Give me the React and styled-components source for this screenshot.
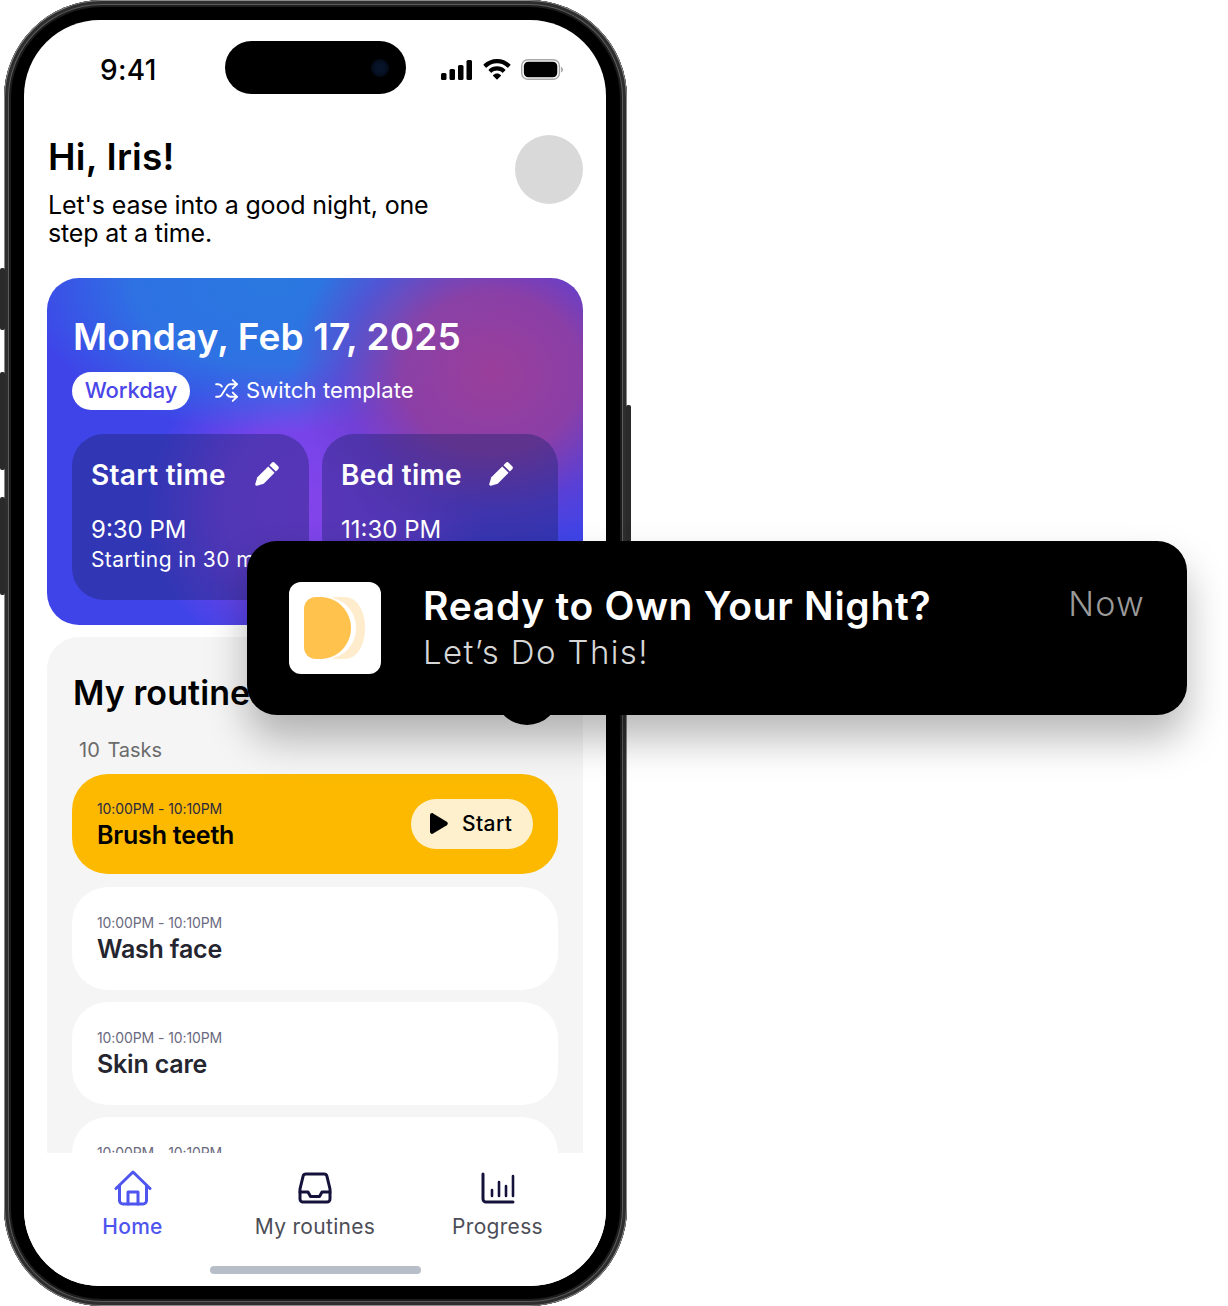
import React from 'react';
import styled, { createGlobalStyle } from 'styled-components';
import { Shuffle } from 'lucide-react';

const GlobalStyle = createGlobalStyle`
  html, body {
    margin: 0;
    padding: 0;
    background: #fff;
  }
  * {
    box-sizing: border-box;
  }
  body {
    font-family: Inter, "Noto Sans", sans-serif;
    color: #000;
  }
`;

const Stage = styled.div`
  position: relative;
  width: 1228px;
  height: 1306px;
  padding-left: 4px;
  overflow: hidden;
`;

const Phone = styled.div`
  position: relative;
  width: 623px;
  height: 1306px;
  padding: 20px 21px 20px 20px;
  background: #000;
  border-radius: 98px;
  box-shadow: inset 0 0 0 1px #8a8a8a, inset 0 0 0 4px #2e2e2e, inset 0 0 0 5px #5c5c5c, inset 0 0 0 7px #1c1c1c;
`;

const SideButton = styled.span`
  position: absolute;
  top: ${(p) => p.$top}px;
  ${(p) => (p.$right ? 'right: -4px;' : 'left: -4px;')}
  width: 5px;
  height: ${(p) => p.$height}px;
  background: #2a2a2a;
  border-radius: 2px;
`;

const Screen = styled.div`
  display: flex;
  flex-direction: column;
  height: 1266px;
  background: #fff;
  border-radius: 76px;
  overflow: hidden;
`;

const StatusBar = styled.div`
  display: grid;
  grid-template-columns: 201px 181px 1fr;
  height: 115px;
  padding-top: 21px;
`;

const Clock = styled.div`
  padding: 12px 0 0 76px;
  font-size: 28px;
  line-height: 34px;
  font-weight: 500;
  letter-spacing: 0.3px;
`;

const Island = styled.div`
  width: 181px;
  height: 53px;
  display: flex;
  align-items: center;
  justify-content: flex-end;
  padding-right: 17px;
  background: #000;
  border-radius: 27px;
`;

const Lens = styled.span`
  width: 18px;
  height: 18px;
  border-radius: 50%;
  background: radial-gradient(circle, #07142a 30%, #040c1a 65%, #000 100%);
`;

const StatusIcons = styled.div`
  display: flex;
  align-items: center;
  height: 53px;
  margin-top: 2px;
  padding-left: 35px;
  gap: 10px;
`;

const Content = styled.div`
  flex: 1;
  min-height: 0;
  display: flex;
  flex-direction: column;
  padding: 0 23px;
  overflow: hidden;
`;

const Header = styled.header`
  display: flex;
  justify-content: space-between;
  height: 143px;
`;

const Heading = styled.h1`
  margin: 0;
  padding-left: 1px;
  font-size: 37px;
  line-height: 44px;
  font-weight: 600;
  letter-spacing: 0.2px;
`;

const Intro = styled.p`
  margin: 12px 0 0;
  padding-left: 1px;
  width: 420px;
  font-size: 25px;
  line-height: 28px;
  letter-spacing: -0.15px;
`;

const Avatar = styled.div`
  width: 68px;
  height: 69px;
  border-radius: 50%;
  background: #d9d9d9;
`;

const DayCard = styled.section`
  flex: none;
  width: 536px;
  height: 347px;
  padding: 34px 25px 25px;
  border-radius: 32px;
  background:
    radial-gradient(200px 180px at 445px 95px, #9a3f9a 0%, rgba(146, 62, 160, 0.9) 45%, rgba(110, 60, 200, 0.55) 75%, transparent 100%),
    radial-gradient(250px 150px at 225px 5px, #2a78e0 0%, rgba(43, 122, 226, 0.85) 55%, transparent 100%),
    radial-gradient(170px 170px at 270px 230px, #8244ea 0%, rgba(130, 68, 234, 0.8) 55%, transparent 100%),
    #3f44e8;
  color: #fff;
`;

const DayTitle = styled.h2`
  margin: 0;
  padding-left: 1px;
  font-size: 37px;
  line-height: 50px;
  font-weight: 600;
  letter-spacing: 0.15px;
`;

const TemplateRow = styled.div`
  display: flex;
  align-items: center;
  gap: 24px;
  margin-top: 10px;
`;

const Pill = styled.span`
  display: flex;
  align-items: center;
  justify-content: center;
  width: 118px;
  height: 38px;
  padding-bottom: 2px;
  border-radius: 19px;
  background: #fff;
  color: #4a46e8;
  font-size: 22px;
  font-weight: 500;
  letter-spacing: -0.1px;
`;

const SwitchLink = styled.span`
  display: flex;
  align-items: center;
  gap: 7px;
  padding-bottom: 2px;
  font-size: 22px;
  letter-spacing: 0.1px;
`;

const TimeGrid = styled.div`
  display: grid;
  grid-template-columns: 237px 236px;
  gap: 13px;
  margin-top: 24px;
`;

const TimeCard = styled.div`
  height: 166px;
  padding: 23px 19px;
  border-radius: 32px;
  background: rgba(32, 36, 110, 0.42);
`;

const TimeHead = styled.div`
  display: flex;
  align-items: center;
  justify-content: space-between;
  width: ${(p) => p.$width}px;
  font-size: 28px;
  line-height: 36px;
  font-weight: 600;
  letter-spacing: 0.3px;
`;

const TimeValue = styled.div`
  margin-top: 22px;
  font-size: 24px;
  line-height: 30px;
`;

const TimeNote = styled.div`
  font-size: 21px;
  line-height: 30px;
  white-space: nowrap;
  letter-spacing: 0.4px;
`;

const Routines = styled.section`
  flex: 1;
  min-height: 0;
  width: 536px;
  margin-top: 12px;
  padding: 31px 25px 0;
  background: #f5f5f5;
  border-radius: 32px 32px 0 0;
  overflow: hidden;
`;

const RoutinesTitle = styled.h2`
  margin: 0;
  padding-left: 1px;
  font-size: 34px;
  line-height: 50px;
  font-weight: 600;
  letter-spacing: 0.1px;
`;

const TaskCount = styled.div`
  margin: 18px 0 10px 7px;
  height: 28px;
  color: #6b6b6b;
  font-size: 20px;
  line-height: 28px;
  word-spacing: 2px;
`;

const TaskList = styled.div`
  display: flex;
  flex-direction: column;
  gap: 12px;
`;

const Task = styled.div`
  flex: none;
  display: flex;
  align-items: center;
  justify-content: space-between;
  height: ${(p) => (p.$active ? 100 : 103)}px;
  margin-bottom: ${(p) => (p.$active ? 1 : 0)}px;
  padding: 0 25px;
  border-radius: 36px;
  background: ${(p) => (p.$active ? '#fcb900' : '#fff')};
`;

const TaskText = styled.div`
  min-height: 51px;
  margin-top: ${(p) => (p.$active ? 1 : 0)}px;
`;

const TaskTime = styled.div`
  color: ${(p) => (p.$active ? '#2c2a40' : '#6b6a80')};
  font-size: 14px;
  line-height: 20px;
  letter-spacing: -0.1px;
`;

const TaskName = styled.div`
  margin-top: 1px;
  color: ${(p) => (p.$active ? '#000' : '#25252f')};
  font-size: 25px;
  line-height: 30px;
  font-weight: 600;
  letter-spacing: -0.2px;
`;

const StartButton = styled.span`
  display: flex;
  align-items: center;
  gap: 14px;
  width: 122px;
  height: 50px;
  padding-left: 19px;
  padding-bottom: 1px;
  border-radius: 25px;
  background: #fef0cc;
  font-size: 21px;
  font-weight: 500;
  letter-spacing: 0.4px;
`;

const TabBar = styled.nav`
  flex: none;
  position: relative;
  display: grid;
  grid-template-columns: repeat(3, 182.5px);
  justify-content: center;
  height: 133px;
  padding-top: 17px;
  background: #fff;
`;

const Tab = styled.div`
  display: flex;
  flex-direction: column;
  align-items: center;
  gap: 7px;
  color: ${(p) => (p.$active ? '#4f55ef' : '#4c4d57')};
  font-size: 21px;
  line-height: 28px;
  font-weight: ${(p) => (p.$active ? 500 : 400)};
  letter-spacing: 0.3px;
`;

const TabIcon = styled.span`
  display: flex;
  align-items: center;
  justify-content: center;
  height: 36px;
`;

const HomeIndicator = styled.span`
  position: absolute;
  left: 186px;
  bottom: 12px;
  width: 211px;
  height: 8px;
  border-radius: 4px;
  background: #b8bec8;
`;

const Notification = styled.aside`
  position: absolute;
  left: 247px;
  top: 541px;
  display: flex;
  width: 940px;
  height: 174px;
  padding: 41px 42px 0;
  background: #000;
  border-radius: 30px;
  box-shadow: 0 24px 40px rgba(0, 0, 0, 0.28);
  color: #fff;

  &::after {
    content: '';
    position: absolute;
    left: 248px;
    bottom: -10px;
    width: 64px;
    height: 64px;
    border-radius: 50%;
    background: #000;
  }
`;

const AppIcon = styled.div`
  flex: none;
  width: 92px;
  height: 92px;
  border-radius: 12px;
  background: #fff;
`;

const NoteBody = styled.div`
  position: relative;
  z-index: 1;
  flex: 1;
  padding-left: 42px;
`;

const NoteTitle = styled.div`
  font-size: 39px;
  line-height: 48px;
  font-weight: 600;
  letter-spacing: 0.7px;
`;

const NoteText = styled.div`
  color: #d6d6d6;
  font-size: 33px;
  line-height: 44px;
  font-weight: 300;
  letter-spacing: 1.4px;
`;

const NoteTime = styled.div`
  color: #9a9a9a;
  font-size: 34px;
  line-height: 44px;
  font-weight: 300;
  letter-spacing: 1.2px;
`;

const SignalIcon = () => (
  <svg width="32" height="20" viewBox="0 0 32 20" fill="#000">
    <rect x="0" y="13" width="5.5" height="7" rx="1.5" />
    <rect x="8.5" y="9" width="5.5" height="11" rx="1.5" />
    <rect x="17" y="5" width="5.5" height="15" rx="1.5" />
    <rect x="25.5" y="0" width="5.5" height="20" rx="1.5" />
  </svg>
);

const WifiIcon = () => (
  <svg width="28" height="21" viewBox="0 0 28 21" fill="#000">
    <path d="M14 0C8.8 0 4.2 2 .7 5.3c-.3.3-.3.7 0 1l2 2.1c.3.3.7.3 1 0C6.4 5.800 10 4.200 14 4.200s7.600 1.600 10.300 4.200c.3.3.7.3 1 0l2-2.100c.3-.3.3-.7 0-1C23.800 2 19.200 0 14 0z" />
    <path d="M14 7.200c-3.200 0-6 1.200-8.200 3.200-.3.3-.3.7 0 1l2.100 2.100c.3.3.7.3 1 0 1.400-1.200 3.100-1.900 5.100-1.900s3.700.7 5.100 1.900c.3.3.7.3 1 0l2.100-2.100c.3-.3.3-.7 0-1C20 8.400 17.200 7.200 14 7.200z" />
    <path d="M14 14.400c-1.500 0-2.800.6-3.800 1.500-.3.3-.3.7 0 1l3.300 3.400c.3.3.7.3 1 0l3.300-3.400c.3-.3.3-.7 0-1-1-.9-2.300-1.500-3.800-1.500z" />
  </svg>
);

const BatteryIcon = () => (
  <svg width="42" height="21" viewBox="0 0 44 22">
    <rect x="0.75" y="0.75" width="39.5" height="20.5" rx="6.5" fill="none" stroke="#a8a8a8" strokeWidth="1.5" />
    <rect x="3" y="3" width="35" height="16" rx="4.5" fill="#000" />
    <path d="M42 8v6c1.200-.5 2-1.700 2-3s-.8-2.500-2-3z" fill="#a8a8a8" />
  </svg>
);

const PencilIcon = () => (
  <svg width="28" height="28" viewBox="0 0 28 28" fill="#fff">
    <g transform="rotate(45 14 14) translate(2 3.750)">
      <path d="M7.500-2.500a2 2 0 0 1 2-2h5a2 2 0 0 1 2 2V.8h-9z" />
      <path d="M7.500 2.600h9V18l-3.300 6.200c-.5.900-1.900.9-2.400 0L7.500 18z" />
    </g>
  </svg>
);

const PlayIcon = () => (
  <svg width="18" height="21" viewBox="0 0 18 21" fill="#000">
    <path d="M0 2.200C0 .6 1.700-.4 3.100.4l13.700 8.300c1.300.8 1.300 2.800 0 3.600L3.100 20.600C1.700 21.400 0 20.400 0 18.800z" />
  </svg>
);

const HomeIcon = () => (
  <svg width="38" height="36" viewBox="0 0 38 36" fill="none" stroke="#4f55ef" strokeWidth="3" strokeLinecap="round" strokeLinejoin="round">
    <path d="M2 18.500 19 2l17 16.500" />
    <path d="M5.500 16v14.500a3.500 3.500 0 0 0 3.500 3.500h20a3.500 3.500 0 0 0 3.500-3.500V16" />
    <path d="M14 34V22h10v12" />
  </svg>
);

const InboxIcon = () => (
  <svg width="34" height="32" viewBox="0 0 34 32" fill="none" stroke="#14123a" strokeWidth="3" strokeLinecap="round" strokeLinejoin="round">
    <path d="M8 2h18a3 3 0 0 1 2.900 2.200L32 17v10a3 3 0 0 1-3 3H5a3 3 0 0 1-3-3V17L5.100 4.200A3 3 0 0 1 8 2z" />
    <path d="M2 20h8l2.500 4.500h9L24 20h8" />
  </svg>
);

const ChartIcon = () => (
  <svg width="34" height="32" viewBox="0 0 34 32" fill="none" stroke="#14123a" strokeWidth="3" strokeLinecap="round">
    <path d="M2 2v25a3 3 0 0 0 3 3h27" />
    <path d="M11 18v6M18 10v14M25 14v10M32 4v20" strokeWidth="2.600" />
  </svg>
);

const LogoMark = () => (
  <svg width="92" height="92" viewBox="0 0 92 92">
    <path d="M44 15h12c12 0 20 14 20 31s-8 31-20 31H44z" fill="#feeccd" />
    <path d="M15 27c0-7 5-12 12-12h7c18 0 31 14 31 31S52 77 34 77h-7c-7 0-12-5-12-12z" fill="#fff" transform="translate(2 0)" />
    <path d="M15 27c0-7 5-12 12-12h5c16 0 30 14 30 31S48 77 32 77h-5c-7 0-12-5-12-12z" fill="#ffc34d" />
  </svg>
);

const tasks = [
  { id: 1, name: 'Wash face' },
  { id: 2, name: 'Skin care' },
  { id: 3 },
];

const App = () => {
  return (
    <Stage>
      <GlobalStyle />
      <Phone>
        <SideButton $top={268} $height={62} />
        <SideButton $top={372} $height={98} />
        <SideButton $top={497} $height={98} />
        <SideButton $right $top={405} $height={195} />
        <Screen>
          <StatusBar>
            <Clock>9:41</Clock>
            <Island>
              <Lens />
            </Island>
            <StatusIcons>
              <SignalIcon />
              <WifiIcon />
              <BatteryIcon />
            </StatusIcons>
          </StatusBar>
          <Content>
            <Header>
              <div>
                <Heading>Hi, Iris!</Heading>
                <Intro>Let's ease into a good night, one step at a time.</Intro>
              </div>
              <Avatar />
            </Header>

            <DayCard>
              <DayTitle>Monday, Feb 17, 2025</DayTitle>
              <TemplateRow>
                <Pill>Workday</Pill>
                <SwitchLink>
                  <Shuffle size={25} strokeWidth={1.8} />
                  Switch template
                </SwitchLink>
              </TemplateRow>
              <TimeGrid>
                <TimeCard>
                  <TimeHead $width={189}>
                    Start time
                    <PencilIcon />
                  </TimeHead>
                  <TimeValue>9:30 PM</TimeValue>
                  <TimeNote>Starting in 30 min</TimeNote>
                </TimeCard>
                <TimeCard>
                  <TimeHead $width={173}>
                    Bed time
                    <PencilIcon />
                  </TimeHead>
                  <TimeValue>11:30 PM</TimeValue>
                </TimeCard>
              </TimeGrid>
            </DayCard>

            <Routines>
              <RoutinesTitle>My routines</RoutinesTitle>
              <TaskCount>10 Tasks</TaskCount>
              <TaskList>
                <Task $active>
                  <TaskText $active>
                    <TaskTime $active>10:00PM - 10:10PM</TaskTime>
                    <TaskName $active>Brush teeth</TaskName>
                  </TaskText>
                  <StartButton>
                    <PlayIcon />
                    Start
                  </StartButton>
                </Task>
                {tasks.map((task) => (
                  <Task key={task.id}>
                    <TaskText>
                      <TaskTime>10:00PM - 10:10PM</TaskTime>
                      {task.name && <TaskName>{task.name}</TaskName>}
                    </TaskText>
                  </Task>
                ))}
              </TaskList>
            </Routines>
          </Content>

          <TabBar>
            <Tab $active>
              <TabIcon>
                <HomeIcon />
              </TabIcon>
              Home
            </Tab>
            <Tab>
              <TabIcon>
                <InboxIcon />
              </TabIcon>
              My routines
            </Tab>
            <Tab>
              <TabIcon>
                <ChartIcon />
              </TabIcon>
              Progress
            </Tab>
            <HomeIndicator />
          </TabBar>
        </Screen>
      </Phone>

      <Notification>
        <AppIcon>
          <LogoMark />
        </AppIcon>
        <NoteBody>
          <NoteTitle>Ready to Own Your Night?</NoteTitle>
          <NoteText>Let’s Do This!</NoteText>
        </NoteBody>
        <NoteTime>Now</NoteTime>
      </Notification>
    </Stage>
  );
};

export default App;
